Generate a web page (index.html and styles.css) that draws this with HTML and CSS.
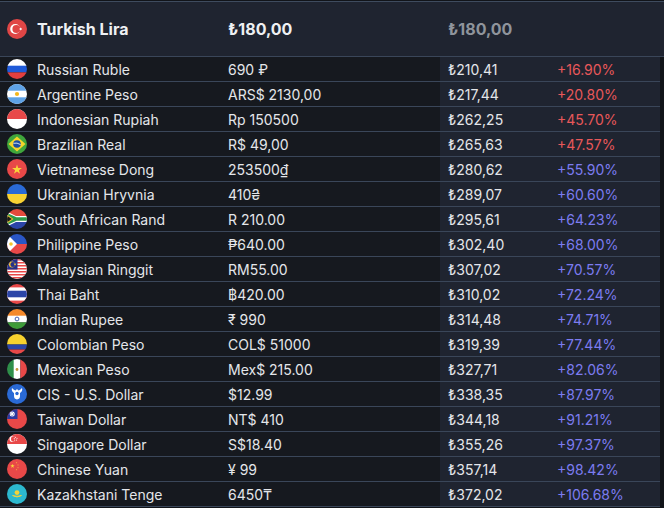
FILE: index.html
```html
<!DOCTYPE html>
<html>
<head>
<meta charset="utf-8">
<link rel="stylesheet" href="styles.css">
</head>
<body>
<svg class="defs" width="0" height="0" aria-hidden="true">
  <defs>
    <polygon id="star" points="0,-1 0.225,-0.309 0.951,-0.309 0.363,0.118 0.588,0.809 0,0.382 -0.588,0.809 -0.363,0.118 -0.951,-0.309 -0.225,-0.309"/>
  </defs>
</svg>
<div class="table">
  <div class="row head">
    <div class="cell name">
      <span class="flag"><svg viewBox="0 0 20 20"><rect width="20" height="20" fill="#e04646"/><circle cx="8.2" cy="10" r="5" fill="#fff"/><circle cx="9.4" cy="10" r="4" fill="#e04646"/><use href="#star" fill="#fff" transform="translate(13.6 10) rotate(-18) scale(1.8)"/></svg></span>
      <span>Turkish Lira</span>
    </div>
    <div class="cell local">₺180,00</div>
    <div class="cell conv"><span class="price muted">₺180,00</span><span class="pct"></span></div>
  </div>

  <div class="row">
    <div class="cell name"><span class="flag"><svg viewBox="0 0 20 20"><rect width="20" height="7" fill="#fff"/><rect y="6.7" width="20" height="6.7" fill="#1f5ad8"/><rect y="13.4" width="20" height="6.6" fill="#e23f3f"/></svg></span><span>Russian Ruble</span></div>
    <div class="cell local">690 ₽</div>
    <div class="cell conv"><span class="price">₺210,41</span><span class="pct up">+16.90%</span></div>
  </div>

  <div class="row">
    <div class="cell name"><span class="flag"><svg viewBox="0 0 20 20"><rect width="20" height="20" fill="#fff"/><rect width="20" height="6.7" fill="#5ea2e6"/><rect y="13.3" width="20" height="6.7" fill="#5ea2e6"/><circle cx="10" cy="10" r="2.1" fill="#f4b71c"/></svg></span><span>Argentine Peso</span></div>
    <div class="cell local">ARS$ 2130,00</div>
    <div class="cell conv"><span class="price">₺217,44</span><span class="pct up">+20.80%</span></div>
  </div>

  <div class="row">
    <div class="cell name"><span class="flag"><svg viewBox="0 0 20 20"><rect width="20" height="20" fill="#fff"/><rect width="20" height="10" fill="#e84848"/></svg></span><span>Indonesian Rupiah</span></div>
    <div class="cell local">Rp 150500</div>
    <div class="cell conv"><span class="price">₺262,25</span><span class="pct up">+45.70%</span></div>
  </div>

  <div class="row">
    <div class="cell name"><span class="flag"><svg viewBox="0 0 20 20"><rect width="20" height="20" fill="#3fa63c"/><polygon points="10,2.5 18.5,10 10,17.5 1.5,10" fill="#f5d52a"/><circle cx="10" cy="10" r="3.8" fill="#1d4fa0"/><path d="M6.4 9.3 Q10 8.3 13.6 10.6" stroke="#fff" stroke-width="0.8" fill="none"/></svg></span><span>Brazilian Real</span></div>
    <div class="cell local">R$ 49,00</div>
    <div class="cell conv"><span class="price">₺265,63</span><span class="pct up">+47.57%</span></div>
  </div>

  <div class="row">
    <div class="cell name"><span class="flag"><svg viewBox="0 0 20 20"><rect width="20" height="20" fill="#e84848"/><use href="#star" fill="#f8d53a" transform="translate(10 10.6) scale(5.2)"/></svg></span><span>Vietnamese Dong</span></div>
    <div class="cell local">253500₫</div>
    <div class="cell conv"><span class="price">₺280,62</span><span class="pct down">+55.90%</span></div>
  </div>

  <div class="row">
    <div class="cell name"><span class="flag"><svg viewBox="0 0 20 20"><rect width="20" height="10" fill="#2a6ad6"/><rect y="10" width="20" height="10" fill="#f8d233"/></svg></span><span>Ukrainian Hryvnia</span></div>
    <div class="cell local">410₴</div>
    <div class="cell conv"><span class="price">₺289,07</span><span class="pct down">+60.60%</span></div>
  </div>

  <div class="row">
    <div class="cell name"><span class="flag"><svg viewBox="0 0 20 20"><rect width="20" height="10" fill="#e54a3c"/><rect y="10" width="20" height="10" fill="#2b45a8"/><path d="M0 2 L8.5 10 L0 18 Z M8.5 10 L20 10" fill="#fff"/><path d="M-1 2 L9 7 L20 7 L20 13 L9 13 L-1 18 Z" fill="#fff"/><path d="M-1 3.5 L9.5 8.2 L20 8.2 L20 11.8 L9.5 11.8 L-1 16.5 Z" fill="#2f9a49"/><path d="M0 5.5 L6.5 10 L0 14.5 Z" fill="#f5c42c"/><path d="M0 6.8 L4.8 10 L0 13.2 Z" fill="#1a1a1a"/></svg></span><span>South African Rand</span></div>
    <div class="cell local">R 210.00</div>
    <div class="cell conv"><span class="price">₺295,61</span><span class="pct down">+64.23%</span></div>
  </div>

  <div class="row">
    <div class="cell name"><span class="flag"><svg viewBox="0 0 20 20"><rect width="20" height="10" fill="#2a56c6"/><rect y="10" width="20" height="10" fill="#e84848"/><path d="M0 0 L10 10 L0 20 Z" fill="#fff"/><circle cx="4" cy="10" r="1.8" fill="#f5c42c"/></svg></span><span>Philippine Peso</span></div>
    <div class="cell local">₱640.00</div>
    <div class="cell conv"><span class="price">₺302,40</span><span class="pct down">+68.00%</span></div>
  </div>

  <div class="row">
    <div class="cell name"><span class="flag"><svg viewBox="0 0 20 20"><rect width="20" height="20" fill="#fff"/><rect y="0" width="20" height="1.5" fill="#e84848"/><rect y="3" width="20" height="1.5" fill="#e84848"/><rect y="6" width="20" height="1.5" fill="#e84848"/><rect y="9" width="20" height="1.5" fill="#e84848"/><rect y="12" width="20" height="1.5" fill="#e84848"/><rect y="15" width="20" height="1.5" fill="#e84848"/><rect y="18" width="20" height="1.5" fill="#e84848"/><rect width="10.5" height="10.5" fill="#25308a"/><circle cx="5" cy="5.5" r="3" fill="#f5c42c"/><circle cx="5.9" cy="5.5" r="2.5" fill="#25308a"/><use href="#star" fill="#f5c42c" transform="translate(8 5.3) scale(1.6)"/></svg></span><span>Malaysian Ringgit</span></div>
    <div class="cell local">RM55.00</div>
    <div class="cell conv"><span class="price">₺307,02</span><span class="pct down">+70.57%</span></div>
  </div>

  <div class="row">
    <div class="cell name"><span class="flag"><svg viewBox="0 0 20 20"><rect width="20" height="20" fill="#e84848"/><rect y="3.4" width="20" height="13.2" fill="#fff"/><rect y="6.7" width="20" height="6.6" fill="#2b45a8"/></svg></span><span>Thai Baht</span></div>
    <div class="cell local">฿420.00</div>
    <div class="cell conv"><span class="price">₺310,02</span><span class="pct down">+72.24%</span></div>
  </div>

  <div class="row">
    <div class="cell name"><span class="flag"><svg viewBox="0 0 20 20"><rect width="20" height="7" fill="#f5892a"/><rect y="6.7" width="20" height="6.7" fill="#fff"/><rect y="13.4" width="20" height="6.6" fill="#3f9b3a"/><circle cx="10" cy="10" r="1.9" fill="none" stroke="#1d3a9a" stroke-width="0.8"/></svg></span><span>Indian Rupee</span></div>
    <div class="cell local">₹ 990</div>
    <div class="cell conv"><span class="price">₺314,48</span><span class="pct down">+74.71%</span></div>
  </div>

  <div class="row">
    <div class="cell name"><span class="flag"><svg viewBox="0 0 20 20"><rect width="20" height="10.5" fill="#f7d12e"/><rect y="10.5" width="20" height="5" fill="#2b45a8"/><rect y="15.5" width="20" height="4.5" fill="#e84848"/></svg></span><span>Colombian Peso</span></div>
    <div class="cell local">COL$ 51000</div>
    <div class="cell conv"><span class="price">₺319,39</span><span class="pct down">+77.44%</span></div>
  </div>

  <div class="row">
    <div class="cell name"><span class="flag"><svg viewBox="0 0 20 20"><rect width="7" height="20" fill="#2f8f4a"/><rect x="6.7" width="6.7" height="20" fill="#fff"/><rect x="13.4" width="6.6" height="20" fill="#e84848"/><circle cx="10" cy="10.5" r="1.4" fill="#c8963c"/></svg></span><span>Mexican Peso</span></div>
    <div class="cell local">Mex$ 215.00</div>
    <div class="cell conv"><span class="price">₺327,71</span><span class="pct down">+82.06%</span></div>
  </div>

  <div class="row">
    <div class="cell name"><span class="flag"><svg viewBox="0 0 20 20"><rect width="20" height="20" fill="#2a6ad6"/><path d="M5 4 Q4 7 7 9 L7 12 Q7 15 10 15.5 Q13 15 13 12 L13 9 Q16 7 15 4 Q13 6 11.5 6.5 L10 5 L8.5 6.5 Q7 6 5 4 Z" fill="#fff"/><circle cx="10" cy="9.5" r="1.7" fill="#2a6ad6"/></svg></span><span>CIS - U.S. Dollar</span></div>
    <div class="cell local">$12.99</div>
    <div class="cell conv"><span class="price">₺338,35</span><span class="pct down">+87.97%</span></div>
  </div>

  <div class="row">
    <div class="cell name"><span class="flag"><svg viewBox="0 0 20 20"><rect width="20" height="20" fill="#e84848"/><rect width="10.5" height="10" fill="#2b3aa0"/><circle cx="5.2" cy="5" r="2.5" fill="#fff"/><circle cx="5.2" cy="5" r="1.6" fill="#2b3aa0"/><circle cx="5.2" cy="5" r="1.3" fill="#fff"/></svg></span><span>Taiwan Dollar</span></div>
    <div class="cell local">NT$ 410</div>
    <div class="cell conv"><span class="price">₺344,18</span><span class="pct down">+91.21%</span></div>
  </div>

  <div class="row">
    <div class="cell name"><span class="flag"><svg viewBox="0 0 20 20"><rect width="20" height="20" fill="#fff"/><rect width="20" height="10" fill="#e84848"/><circle cx="5.5" cy="5" r="3" fill="#fff"/><circle cx="6.7" cy="5" r="2.7" fill="#e84848"/><circle cx="8.5" cy="3.3" r="0.55" fill="#fff"/><circle cx="10" cy="4.3" r="0.55" fill="#fff"/><circle cx="9.6" cy="6.1" r="0.55" fill="#fff"/><circle cx="7.7" cy="6.1" r="0.55" fill="#fff"/><circle cx="7.3" cy="4.3" r="0.55" fill="#fff"/></svg></span><span>Singapore Dollar</span></div>
    <div class="cell local">S$18.40</div>
    <div class="cell conv"><span class="price">₺355,26</span><span class="pct down">+97.37%</span></div>
  </div>

  <div class="row">
    <div class="cell name"><span class="flag"><svg viewBox="0 0 20 20"><rect width="20" height="20" fill="#e84848"/><use href="#star" fill="#f8d53a" transform="translate(5.5 7) scale(2.3)"/><use href="#star" fill="#f8d53a" transform="translate(9.5 3.8) scale(0.8)"/><use href="#star" fill="#f8d53a" transform="translate(11 6) scale(0.8)"/><use href="#star" fill="#f8d53a" transform="translate(11 8.8) scale(0.8)"/><use href="#star" fill="#f8d53a" transform="translate(9.5 10.8) scale(0.8)"/></svg></span><span>Chinese Yuan</span></div>
    <div class="cell local">¥ 99</div>
    <div class="cell conv"><span class="price">₺357,14</span><span class="pct down">+98.42%</span></div>
  </div>

  <div class="row">
    <div class="cell name"><span class="flag"><svg viewBox="0 0 20 20"><rect width="20" height="20" fill="#2cb8cf"/><circle cx="10" cy="8.6" r="2.4" fill="#f5d23a"/><path d="M5.5 11.5 Q10 14.5 14.5 11.5 Q10 13 5.5 11.5 Z" fill="#f5d23a" stroke="#f5d23a" stroke-width="0.8"/></svg></span><span>Kazakhstani Tenge</span></div>
    <div class="cell local">6450₸</div>
    <div class="cell conv"><span class="price">₺372,02</span><span class="pct down">+106.68%</span></div>
  </div>
</div>
</body>
</html>
```
FILE: styles.css
```css
html, body {
  margin: 0;
  padding: 0;
  background: #111419;
  height: 100%;
  overflow: hidden;
}
.defs {
  position: absolute;
  width: 0;
  height: 0;
}
.table {
  padding-top: 1px;
  font-family: Inter, "Noto Sans", sans-serif;
  font-size: 14px;
  color: #e4e6ea;
}
.row {
  display: grid;
  grid-template-columns: 228px 212px 220px;
  height: 24px;
  border-bottom: 1px solid #3a4659;
  background: #16191f;
  width: 660px;
}
.row.head {
  width: 664px;
  grid-template-columns: 228px 212px 224px;
  height: 54px;
  border-top: 1px solid #3e4b5e;
  background: #1f2430;
  font-size: 16px;
  font-weight: 700;
  color: #eef0f3;
}
.cell {
  display: flex;
  align-items: center;
  white-space: nowrap;
}
.name {
  padding-left: 7px;
  gap: 10px;
}
.flag {
  width: 20px;
  height: 20px;
  border-radius: 50%;
  overflow: hidden;
  flex: none;
  display: block;
}
.flag svg {
  width: 20px;
  height: 20px;
  display: block;
}
.conv {
  background: #1f2430;
  padding-left: 8px;
}
.price {
  width: 109px;
}
.muted {
  color: #8f949c;
}
.pct.up {
  color: #e8585a;
}
.pct.down {
  color: #7c7cf0;
}
```
